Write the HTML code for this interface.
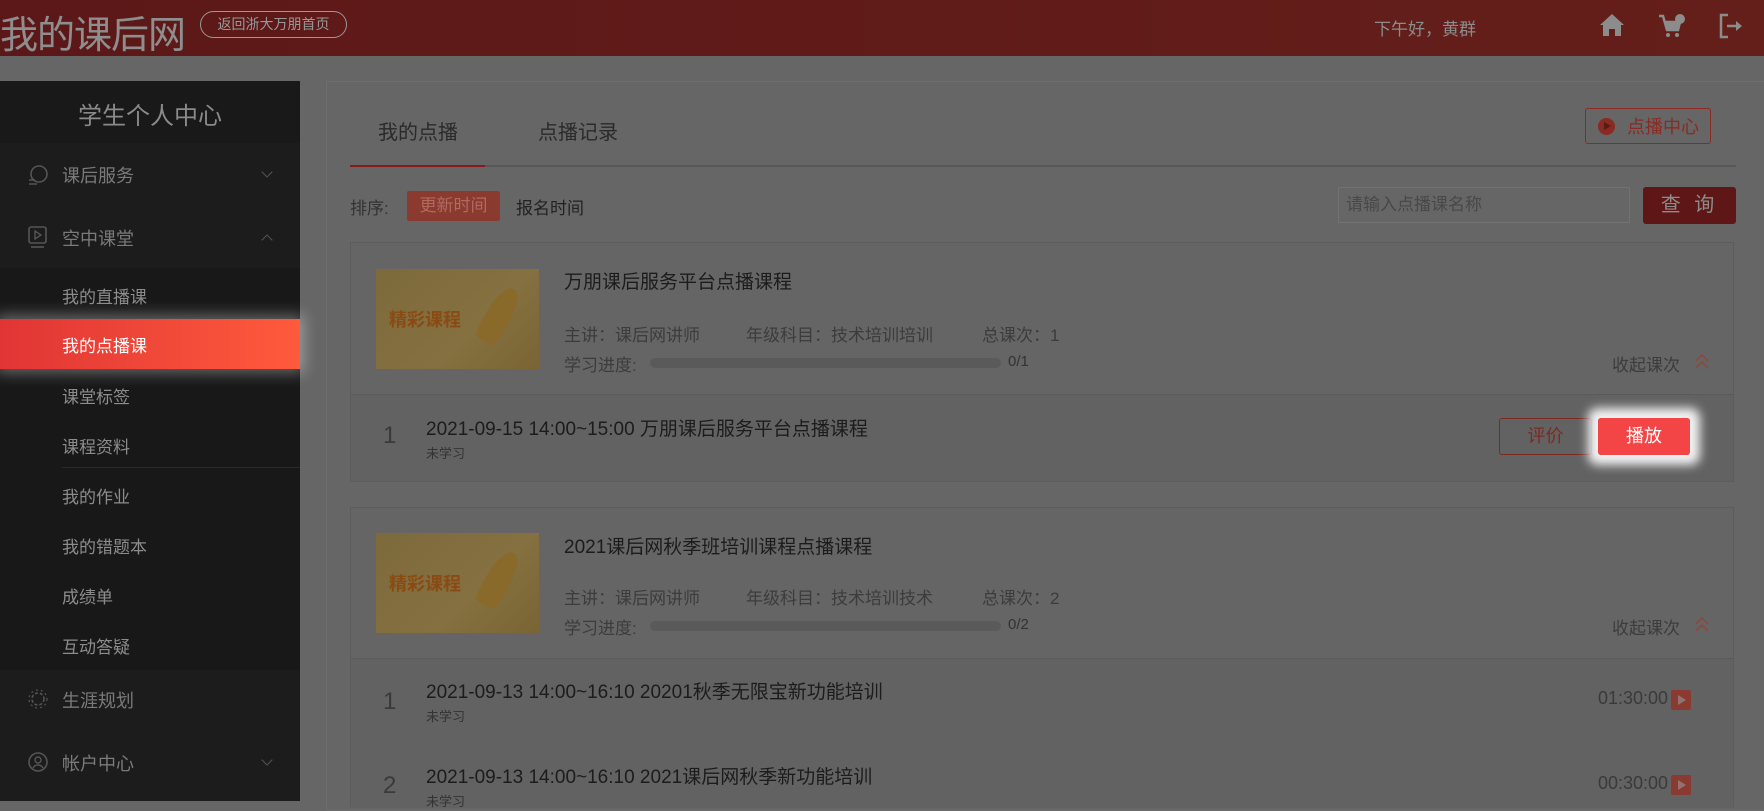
<!DOCTYPE html>
<html><head><meta charset="utf-8">
<style>
*{margin:0;padding:0;box-sizing:border-box}
body{width:1764px;height:801px;overflow:hidden;background:#666;font-family:"Liberation Sans","Noto Sans CJK SC",sans-serif;position:relative}
.a{position:absolute;white-space:nowrap}
.hdr{left:0;top:0;width:1764px;height:56px;background:linear-gradient(90deg,#5c1818,#641f1a)}
.sb{left:0;top:81px;width:300px;height:720px;background:#1c1c1c}
.panel{left:326px;top:81px;width:1450px;height:730px;background:#666;border:1px solid #6e6e6e}
.card{background:#656565;border:1px solid #5c5c5c}
.t{color:#1c1c1c}
.m{color:#3c3c3c;font-size:17px}
.side{color:#7a7a7a;font-size:18px;left:62px}
.sub{color:#8c8c8c;font-size:17px;left:62px}
.chev{width:8px;height:8px;border-right:1.5px solid #555;border-bottom:1.5px solid #555}
</style></head><body>
<div class="a hdr"></div>
<div class="a" style="left:0;top:4px;font-size:38px;color:#8e8e8e;letter-spacing:-1px">我的课后网</div>
<div class="a" style="left:200px;top:11px;width:147px;height:27px;border:1px solid #999;border-radius:14px;color:#999;font-size:14px;line-height:25px;text-align:center">返回浙大万朋首页</div>
<div class="a" style="left:1374px;top:15px;color:#8c8c8c;font-size:17px">下午好，黄群</div>
<svg class="a" style="left:1599px;top:12px" width="26" height="26" viewBox="0 0 26 26"><path d="M13 2 L1 13 L4 13 L4 24 L10 24 L10 17 L16 17 L16 24 L22 24 L22 13 L25 13 Z" fill="#8c8c8c"/></svg>
<svg class="a" style="left:1658px;top:13px" width="28" height="26" viewBox="0 0 28 26"><path d="M1 3 L5 3 L9 17 L20 17 L22 9 L7 9" fill="none" stroke="#8c8c8c" stroke-width="2.5"/><rect x="8" y="9" width="13" height="8" fill="#8c8c8c"/><circle cx="10" cy="22" r="2" fill="#8c8c8c"/><circle cx="19" cy="22" r="2" fill="#8c8c8c"/><circle cx="22" cy="6" r="5" fill="#8c8c8c"/></svg>
<svg class="a" style="left:1719px;top:13px" width="26" height="26" viewBox="0 0 26 26"><path d="M9 2 L2 2 L2 24 L9 24" fill="none" stroke="#8c8c8c" stroke-width="2.5"/><path d="M8 13 L21 13" stroke="#8c8c8c" stroke-width="2.5"/><path d="M17 8 L23 13 L17 18 Z" fill="#8c8c8c"/></svg>

<div class="a sb"></div>
<div class="a" style="left:0;top:81px;width:300px;height:62px;background:#191919"></div>
<div class="a" style="left:0;top:96px;width:300px;text-align:center;color:#8a8a8a;font-size:24px">学生个人中心</div>
<svg class="a" style="left:28px;top:164px" width="20" height="22" viewBox="0 0 20 22"><circle cx="11" cy="10" r="8" fill="none" stroke="#555" stroke-width="1.6"/><path d="M1 16h6M1 20h8" stroke="#555" stroke-width="1.6"/></svg>
<div class="a side" style="top:162px">课后服务</div>
<div class="a chev" style="left:263px;top:168px;transform:rotate(45deg)"></div>
<svg class="a" style="left:28px;top:226px" width="20" height="24" viewBox="0 0 20 24"><rect x="1" y="1" width="17" height="16" rx="2" fill="none" stroke="#555" stroke-width="1.6"/><path d="M7 5l6 4-6 4z" fill="none" stroke="#555" stroke-width="1.4"/><path d="M3 21h13" stroke="#555" stroke-width="1.6"/></svg>
<div class="a side" style="top:225px">空中课堂</div>
<div class="a chev" style="left:263px;top:236px;transform:rotate(-135deg)"></div>
<div class="a" style="left:0;top:268px;width:300px;height:402px;background:#181818"></div>
<div class="a sub" style="top:283px">我的直播课</div>
<div class="a" style="left:0;top:319px;width:300px;height:50px;background:linear-gradient(90deg,#e03535,#ff5a3c);box-shadow:0 0 14px 4px rgba(255,255,255,.35)"></div>
<div class="a" style="left:62px;top:332px;color:#fff;font-size:17px">我的点播课</div>
<div class="a sub" style="top:383px">课堂标签</div>
<div class="a sub" style="top:433px">课程资料</div>
<div class="a" style="left:62px;top:467px;width:238px;height:1px;background:#2a2a2a"></div>
<div class="a sub" style="top:483px">我的作业</div>
<div class="a sub" style="top:533px">我的错题本</div>
<div class="a sub" style="top:583px">成绩单</div>
<div class="a sub" style="top:633px">互动答疑</div>
<svg class="a" style="left:28px;top:689px" width="20" height="20" viewBox="0 0 20 20"><circle cx="10" cy="10" r="6" fill="none" stroke="#555" stroke-width="1.6" stroke-dasharray="3 2"/><circle cx="10" cy="10" r="9" fill="none" stroke="#555" stroke-width="1.2" stroke-dasharray="2 3"/></svg>
<div class="a side" style="top:687px">生涯规划</div>
<svg class="a" style="left:28px;top:752px" width="20" height="20" viewBox="0 0 20 20"><circle cx="10" cy="10" r="9" fill="none" stroke="#555" stroke-width="1.6"/><circle cx="10" cy="8" r="3" fill="none" stroke="#555" stroke-width="1.4"/><path d="M5 16c2-4 8-4 10 0" fill="none" stroke="#555" stroke-width="1.4"/></svg>
<div class="a side" style="top:750px">帐户中心</div>
<div class="a chev" style="left:263px;top:756px;transform:rotate(45deg)"></div>

<div class="a panel"></div>
<div class="a t" style="left:378px;top:116px;font-size:20px;color:#2a2a2a">我的点播</div>
<div class="a t" style="left:538px;top:116px;font-size:20px;color:#2a2a2a">点播记录</div>
<div class="a" style="left:350px;top:165px;width:1386px;height:2px;background:#575757"></div>
<div class="a" style="left:350px;top:165px;width:135px;height:2px;background:#8a1a1a"></div>
<div class="a" style="left:1585px;top:108px;width:126px;height:36px;border:1px solid #8a2a22;border-radius:3px"></div>
<div class="a" style="left:1598px;top:118px;width:17px;height:17px;border-radius:50%;background:#8a2a22"></div>
<div class="a" style="left:1604px;top:122px;border-left:7px solid #5a1a16;border-top:4.5px solid transparent;border-bottom:4.5px solid transparent"></div>
<div class="a" style="left:1627px;top:113px;color:#8a2a22;font-size:18px">点播中心</div>

<div class="a" style="left:350px;top:194px;color:#333;font-size:17px">排序:</div>
<div class="a" style="left:407px;top:191px;width:93px;height:30px;background:#8b3a30;border-radius:2px;color:#b06a60;font-size:17px;line-height:30px;text-align:center">更新时间</div>
<div class="a" style="left:516px;top:194px;color:#222;font-size:17px">报名时间</div>
<div class="a" style="left:1338px;top:187px;width:292px;height:36px;border:1px solid #727272;color:#484848;font-size:17px;line-height:34px;padding-left:7px">请输入点播课名称</div>
<div class="a" style="left:1643px;top:187px;width:93px;height:37px;background:#5e1616;border-radius:3px;color:#8c8c8c;font-size:20px;line-height:37px;text-align:center;letter-spacing:4px">查 询</div>

<!-- card1 -->
<div class="a card" style="left:350px;top:242px;width:1384px;height:240px"></div>
<div class="a" style="left:351px;top:394px;width:1382px;height:87px;background:#626262;border-top:1px solid #5a5a5a"></div>
<div class="a" style="left:376px;top:269px;width:163px;height:100px;background:linear-gradient(135deg,#7d6a3a,#857040 60%,#7a6434)"></div>
<div class="a" style="left:389px;top:306px;color:#8a4a14;font-size:18px;font-weight:bold">精彩课程</div>
<div class="a" style="left:487px;top:285px;width:24px;height:60px;background:#8a6a2a;border-radius:50% 50% 20% 20%;transform:rotate(30deg)"></div>
<div class="a t" style="left:564px;top:267px;font-size:19px">万朋课后服务平台点播课程</div>
<div class="a m" style="left:564px;top:321px">主讲：课后网讲师</div>
<div class="a m" style="left:746px;top:321px">年级科目：技术培训培训</div>
<div class="a m" style="left:982px;top:321px">总课次：1</div>
<div class="a m" style="left:564px;top:351px">学习进度:</div>
<div class="a" style="left:650px;top:358px;width:351px;height:10px;border-radius:5px;background:#5a5a5a"></div>
<div class="a" style="left:1008px;top:353px;color:#333;font-size:15px">0/1</div>
<div class="a m" style="left:1612px;top:351px">收起课次</div>
<svg class="a" style="left:1694px;top:352px" width="16" height="18" viewBox="0 0 16 18"><path d="M2 9 L8 3 L14 9 M2 16 L8 10 L14 16" fill="none" stroke="#8a4a40" stroke-width="1.6"/></svg>
<div class="a" style="left:383px;top:422px;color:#3a3a3a;font-size:24px">1</div>
<div class="a t" style="left:426px;top:414px;font-size:19px">2021-09-15 14:00~15:00 万朋课后服务平台点播课程</div>
<div class="a" style="left:426px;top:443px;color:#333;font-size:13px">未学习</div>
<div class="a" style="left:1499px;top:418px;width:93px;height:37px;border:1px solid #7a2a22;border-radius:3px;color:#7a2a22;font-size:18px;line-height:35px;text-align:center">评价</div>
<div class="a" style="left:1598px;top:418px;width:92px;height:37px;background:#f44546;border-radius:3px;box-shadow:0 0 10px 10px rgba(255,255,255,.92)"></div>
<div class="a" style="left:1598px;top:418px;width:92px;height:37px;background:#f44546;border-radius:3px;color:#fff;font-size:18px;line-height:37px;text-align:center">播放</div>

<!-- card2 -->
<div class="a card" style="left:350px;top:507px;width:1384px;height:300px"></div>
<div class="a" style="left:351px;top:658px;width:1382px;height:150px;background:#626262;border-top:1px solid #5a5a5a"></div>
<div class="a" style="left:376px;top:533px;width:163px;height:100px;background:linear-gradient(135deg,#7d6a3a,#857040 60%,#7a6434)"></div>
<div class="a" style="left:389px;top:570px;color:#8a4a14;font-size:18px;font-weight:bold">精彩课程</div>
<div class="a" style="left:487px;top:549px;width:24px;height:60px;background:#8a6a2a;border-radius:50% 50% 20% 20%;transform:rotate(30deg)"></div>
<div class="a t" style="left:564px;top:532px;font-size:19px">2021课后网秋季班培训课程点播课程</div>
<div class="a m" style="left:564px;top:584px">主讲：课后网讲师</div>
<div class="a m" style="left:746px;top:584px">年级科目：技术培训技术</div>
<div class="a m" style="left:982px;top:584px">总课次：2</div>
<div class="a m" style="left:564px;top:614px">学习进度:</div>
<div class="a" style="left:650px;top:621px;width:351px;height:10px;border-radius:5px;background:#5a5a5a"></div>
<div class="a" style="left:1008px;top:616px;color:#333;font-size:15px">0/2</div>
<div class="a m" style="left:1612px;top:614px">收起课次</div>
<svg class="a" style="left:1694px;top:615px" width="16" height="18" viewBox="0 0 16 18"><path d="M2 9 L8 3 L14 9 M2 16 L8 10 L14 16" fill="none" stroke="#8a4a40" stroke-width="1.6"/></svg>
<div class="a" style="left:383px;top:688px;color:#3a3a3a;font-size:24px">1</div>
<div class="a t" style="left:426px;top:677px;font-size:19px">2021-09-13 14:00~16:10 20201秋季无限宝新功能培训</div>
<div class="a" style="left:426px;top:706px;color:#333;font-size:13px">未学习</div>
<div class="a" style="left:1598px;top:688px;color:#3a3a3a;font-size:18px">01:30:00</div>
<div class="a" style="left:1671px;top:690px;width:20px;height:20px;background:#8a3a30;border-radius:2px"></div>
<div class="a" style="left:1678px;top:695px;border-left:8px solid #999;border-top:5px solid transparent;border-bottom:5px solid transparent;opacity:.6"></div>
<div class="a" style="left:383px;top:772px;color:#3a3a3a;font-size:24px">2</div>
<div class="a t" style="left:426px;top:762px;font-size:19px">2021-09-13 14:00~16:10 2021课后网秋季新功能培训</div>
<div class="a" style="left:426px;top:791px;color:#333;font-size:13px">未学习</div>
<div class="a" style="left:1598px;top:773px;color:#3a3a3a;font-size:18px">00:30:00</div>
<div class="a" style="left:1671px;top:775px;width:20px;height:20px;background:#8a3a30;border-radius:2px"></div>
<div class="a" style="left:1678px;top:780px;border-left:8px solid #999;border-top:5px solid transparent;border-bottom:5px solid transparent;opacity:.6"></div>
</body></html>
